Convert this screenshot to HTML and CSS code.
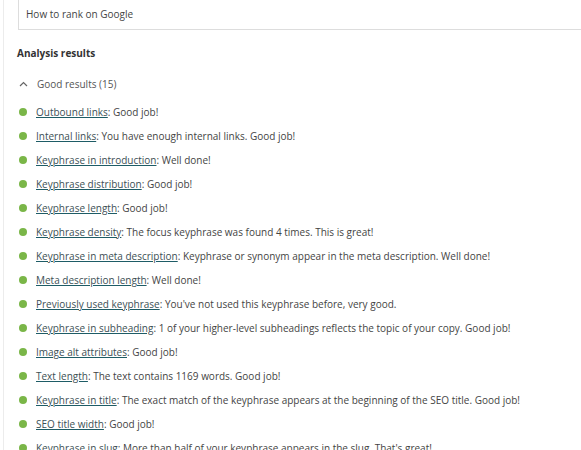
FILE: index.html
```html
<!DOCTYPE html>
<html lang="en">
<head>
    <meta charset="UTF-8">
    <title>Analysis results</title>
    <link rel="stylesheet" href="styles.css">
</head>
<body>
    <div class="panel">
        <div class="keyphrase-input">How to rank on Google</div>

        <h3 class="analysis-title">Analysis results</h3>

        <button class="collapse-toggle">
            <svg class="chevron" width="9" height="6" viewBox="0 0 9 6"><path d="M1 5 L4.5 1.5 L8 5" fill="none" stroke="#666" stroke-width="1.2"/></svg>
            Good results (15)
        </button>

        <ul class="results">
            <li><span class="bullet"></span><a href="#">Outbound links</a>: Good job!</li>
            <li><span class="bullet"></span><a href="#">Internal links</a>: You have enough internal links. Good job!</li>
            <li><span class="bullet"></span><a href="#">Keyphrase in introduction</a>: Well done!</li>
            <li><span class="bullet"></span><a href="#">Keyphrase distribution</a>: Good job!</li>
            <li><span class="bullet"></span><a href="#">Keyphrase length</a>: Good job!</li>
            <li><span class="bullet"></span><a href="#">Keyphrase density</a>: The focus keyphrase was found 4 times. This is great!</li>
            <li><span class="bullet"></span><a href="#">Keyphrase in meta description</a>: Keyphrase or synonym appear in the meta description. Well done!</li>
            <li><span class="bullet"></span><a href="#">Meta description length</a>: Well done!</li>
            <li><span class="bullet"></span><a href="#">Previously used keyphrase</a>: You've not used this keyphrase before, very good.</li>
            <li><span class="bullet"></span><a href="#">Keyphrase in subheading</a>: 1 of your higher-level subheadings reflects the topic of your copy. Good job!</li>
            <li><span class="bullet"></span><a href="#">Image alt attributes</a>: Good job!</li>
            <li><span class="bullet"></span><a href="#">Text length</a>: The text contains 1169 words. Good job!</li>
            <li><span class="bullet"></span><a href="#">Keyphrase in title</a>: The exact match of the keyphrase appears at the beginning of the SEO title. Good job!</li>
            <li><span class="bullet"></span><a href="#">SEO title width</a>: Good job!</li>
            <li><span class="bullet"></span><a href="#">Keyphrase in slug</a>: More than half of your keyphrase appears in the slug. That's great!</li>
        </ul>
    </div>
</body>
</html>
```

FILE: styles.css
```css
body {
    margin: 0;
    padding: 0;
    background-color: #fff;
    font-family: "Open Sans", Arial, sans-serif;
    font-size: 10px;
    color: #444;
    overflow: hidden;
}
.panel {
    margin-left: 3px;
    border-left: 1px solid #ececec;
    padding-left: 13px;
    min-height: 450px;
}
.keyphrase-input {
    margin-left: 1px;
    height: 29px;
    line-height: 28px;
    padding-left: 7px;
    border: 1px solid #ddd;
    border-top: none;
    border-right: none;
    color: #444;
}
.analysis-title {
    margin: 15px 0 0 0;
    font-size: 10px;
    font-weight: bold;
    color: #333;
    line-height: 16px;
}
.collapse-toggle {
    display: flex;
    align-items: center;
    gap: 9px;
    margin: 15px 0 0 0;
    padding: 0 0 0 2px;
    border: none;
    background: none;
    font: inherit;
    color: #555;
    line-height: 16px;
}
.results {
    list-style: none;
    margin: 8px 0 0 0;
    padding: 0;
}
.results li {
    display: flex;
    align-items: center;
    height: 24px;
    white-space: nowrap;
}
.bullet {
    width: 8px;
    height: 8px;
    border-radius: 50%;
    background-color: #7ab648;
    margin: 0 9px 0 2px;
    flex-shrink: 0;
}
.results a {
    color: #3d4f55;
    text-decoration: underline;
    text-decoration-color: #1e5c66;
}
```
